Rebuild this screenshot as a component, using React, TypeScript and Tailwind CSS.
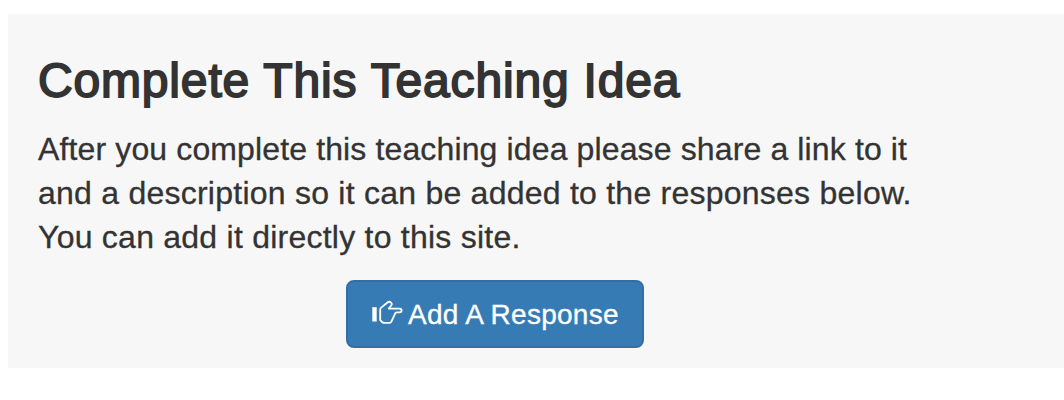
import React from "react";

const HandPointRight: React.FC = () => (
  <svg
    className="h-[28px] w-[32px] shrink-0"
    viewBox="0 0 32 28"
    fill="none"
    xmlns="http://www.w3.org/2000/svg"
  >
    <rect x="1.3" y="7.2" width="4.4" height="14.3" fill="white" />
    <path
      d="M9.2 9.6 Q9.2 8.4 10.2 7.6 L16.8 2.3 Q18.4 1.1 19.8 2.4 Q21.4 3.8 20.4 5.2 L17.8 8.6 H28.6 Q30.6 8.7 30.6 10.5 Q30.6 12.4 28.6 12.4 H25.6 Q24.5 12.4 24.2 13.4 L20.4 21.6 Q19.8 22.9 18.4 22.9 H13.2 Q12.2 22.9 11.4 22.2 L9.8 20.8 Q9.2 20.2 9.2 19.2 Z"
      stroke="white"
      strokeWidth="1.8"
      strokeLinejoin="round"
    />
  </svg>
);

const App: React.FC = () => {
  return (
    <div className="h-[400px] w-full bg-white pt-[14px] pl-2 font-['Liberation_Sans',Arial,sans-serif] text-[#333333]">
      <section className="h-[354px] bg-[#f7f7f7] pt-[40px] pl-[30px]">
        <h2 className="text-[48px] leading-[53px] font-normal tracking-[0.83px] whitespace-nowrap [-webkit-text-stroke:1.8px]">
          Complete This Teaching Idea
        </h2>
        <p className="mt-[20px] text-[32px] leading-[44px] whitespace-nowrap [-webkit-text-stroke:0.3px]">
          <span className="block tracking-[0.13px]">
            After you complete this teaching idea please share a link to it
          </span>
          <span className="block tracking-[0.24px]">
            and a description so it can be added to the responses below.
          </span>
          <span className="block tracking-[0.24px]">
            You can add it directly to this site.
          </span>
        </p>
        <button className="mt-[21px] ml-[308px] flex h-[68px] w-[298px] items-center rounded-lg border-2 border-[#336fa5] bg-[#377bb5] pl-[23px] text-[28px] whitespace-nowrap text-white">
          <HandPointRight />
          <span className="ml-[5px] pt-[2px] tracking-[0.27px] [-webkit-text-stroke:0.3px]">
            Add A Response
          </span>
        </button>
      </section>
    </div>
  );
};

export default App;
